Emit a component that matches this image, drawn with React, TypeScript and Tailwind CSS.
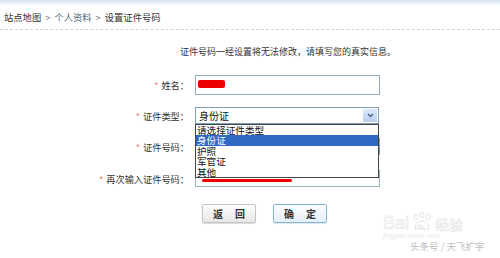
import { useState } from "react";

const FONT = "font-['SimSun','Noto_Sans_CJK_SC',sans-serif]";

function Label({ text }: { text: string }) {
  return (
    <div className="w-[195px] shrink-0 pr-[6px] text-right text-[9.2px] leading-[12px] text-[#333]">
      <span className="mr-[3px] text-[#f08080]">*</span>
      {text}：
    </div>
  );
}

export default function App() {
  const [open] = useState(true);
  const options = ["请选择证件类型", "身份证", "护照", "军官证", "其他"];

  return (
    <div
      className={`relative h-[258px] w-[500px] overflow-hidden bg-white ${FONT}`}
    >
      <div className="h-[6px] bg-gradient-to-b from-[#d3e2f1] to-white" />

      <div className="flex h-[23px] items-center gap-[4px] pl-[4px] text-[9.3px] text-[#333]">
        <span>站点地图</span>
        <span className="text-[#888]">&gt;</span>
        <span className="text-[#56707e]">个人资料</span>
        <span className="text-[#888]">&gt;</span>
        <span>设置证件号码</span>
      </div>
      <div className="border-b border-dashed border-[#d4d4d4]" />

      <div className="mt-[16px] pl-[180px] text-[9px] leading-[12px] text-[#333]">
        证件号码一经设置将无法修改，请填写您的真实信息。
      </div>

      <div className="mt-[17px] flex flex-col">
        <div className="flex h-[20px] items-center">
          <Label text="姓名" />
          <div className="relative h-[20px] w-[185px] border border-[#8fb0b8] bg-white">
            <div className="absolute left-[2px] top-[4px] h-[8px] w-[27px] rounded-[2px] bg-[#ee0000]" />
          </div>
        </div>

        <div className="mt-[12px] flex h-[17px] items-center">
          <Label text="证件类型" />
          <div className="relative h-[17px] w-[184px]">
            <div className="flex h-full w-full border border-[#7f9db9] bg-white">
              <div className="flex-1 pl-[3px] text-[10px] leading-[15px] text-[#111]">
                身份证
              </div>
              <div className="m-[1px] flex w-[14px] items-center justify-center rounded-[1px] bg-gradient-to-b from-[#dde8f8] to-[#b9cdee]">
                <svg width="7" height="5" viewBox="0 0 7 5">
                  <path d="M1 1 L3.5 3.5 L6 1" stroke="#4d6185" strokeWidth="1.4" fill="none" />
                </svg>
              </div>
            </div>
            {open && (
              <div className="absolute left-0 top-[17px] z-10 w-[184px] border border-[#444] bg-white">
                {options.map((o, i) => (
                  <div
                    key={o}
                    className={`h-[10.4px] pl-[1px] text-[9.6px] leading-[10.4px] ${
                      i === 1 ? "bg-[#3169c6] text-white" : "text-[#111]"
                    }`}
                  >
                    {o}
                  </div>
                ))}
              </div>
            )}
          </div>
        </div>

        <div className="mt-[14px] flex h-[17px] items-center">
          <Label text="证件号码" />
          <div className="h-[17px] w-[185px] border border-[#7f9db9] bg-white" />
        </div>

        <div className="mt-[15px] flex h-[17px] items-center">
          <Label text="再次输入证件号码" />
          <div className="relative h-[17px] w-[185px] border border-[#9bb4c0] bg-white">
            <div className="absolute left-[6px] top-[8px] h-[3px] w-[90px] rounded-full bg-[#ee0000]" />
          </div>
        </div>
      </div>

      <div className="mt-[17px] flex gap-[17px] pl-[202px]">
        <button className="flex h-[19px] w-[54px] items-center justify-center gap-[12px] rounded-[2px] border border-[#c4c4c4] bg-gradient-to-b from-white to-[#e6e6e6] text-[10px] font-bold text-[#333] shadow-[0_1px_1px_rgba(0,0,0,0.15)]">
          <span>返</span>
          <span>回</span>
        </button>
        <button className="flex h-[19px] w-[54px] items-center justify-center gap-[12px] rounded-[2px] border border-[#7fb8dc] bg-gradient-to-b from-white to-[#e4eef6] text-[10px] font-bold text-[#333] shadow-[0_1px_1px_rgba(0,0,0,0.1)]">
          <span>确</span>
          <span>定</span>
        </button>
      </div>

      <div className="absolute left-[383px] top-[212px] flex flex-col items-start opacity-70">
        <div className="flex items-end gap-[2px]">
          <span className="font-['Liberation_Sans',sans-serif] text-[18px] leading-[18px] text-white [-webkit-text-stroke:0.6px_#d8d8d8]">
            Bai
          </span>
          <svg width="22" height="20" viewBox="0 0 22 20">
            <g fill="none" stroke="#d8d8d8" strokeWidth="1">
              <ellipse cx="5" cy="5" rx="2" ry="3" />
              <ellipse cx="11" cy="3" rx="2" ry="2.6" />
              <ellipse cx="17" cy="5" rx="2" ry="3" />
              <path d="M4 17 Q4 10 11 9 Q18 10 18 17 Z" />
            </g>
            <text x="6" y="16" fontSize="6" fill="#d0d0d0" fontFamily="Liberation Sans">du</text>
          </svg>
          <span className="text-[14px] leading-[16px] text-white [-webkit-text-stroke:0.5px_#d8d8d8]">
            经验
          </span>
        </div>
        <span className="font-['Liberation_Sans',sans-serif] text-[7px] italic leading-[8px] text-[#e2e2e2]">
          jingyan.baidu.com
        </span>
      </div>
      <div className="absolute left-[410px] top-[241px] text-[9.5px] leading-[11px] text-[#bdbdbd]">
        头条号 / 天飞扩宇
      </div>
    </div>
  );
}
